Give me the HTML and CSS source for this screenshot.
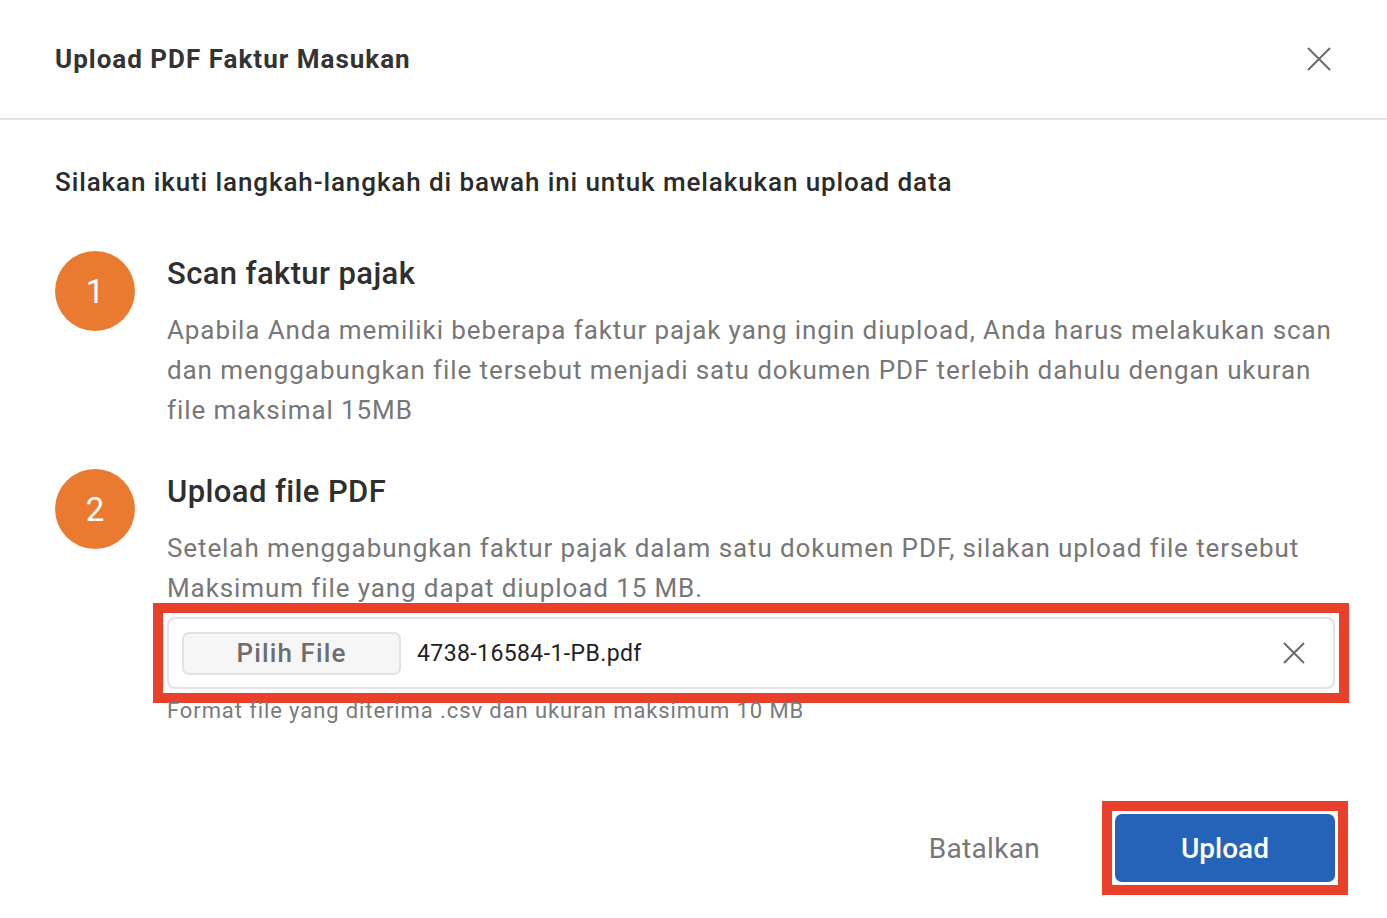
FILE: index.html
```html
<!DOCTYPE html>
<html>
<head>
    <title>Upload PDF Faktur Masukan</title>
    <link rel="stylesheet" href="styles.css">
</head>
<body>
    <div class="modal">
        <div class="modal-header">
            <h1>Upload PDF Faktur Masukan</h1>
            <button class="close-btn" aria-label="Tutup">
                <svg width="24" height="24" viewBox="0 0 24 24"><path d="M1 1L23 23M23 1L1 23" stroke="#6b6b6b" stroke-width="2" fill="none"/></svg>
            </button>
        </div>
        <div class="modal-body">
            <p class="intro">Silakan ikuti langkah-langkah di bawah ini untuk melakukan upload data</p>

            <div class="step">
                <div class="step-number">1</div>
                <div class="step-content">
                    <h2>Scan faktur pajak</h2>
                    <p>Apabila Anda memiliki beberapa faktur pajak yang ingin diupload, Anda harus melakukan scan dan menggabungkan file tersebut menjadi satu dokumen PDF terlebih dahulu dengan ukuran file maksimal 15MB</p>
                </div>
            </div>

            <div class="step">
                <div class="step-number">2</div>
                <div class="step-content">
                    <h2>Upload file PDF</h2>
                    <p>Setelah menggabungkan faktur pajak dalam satu dokumen PDF, silakan upload file tersebut<br>Maksimum file yang dapat diupload 15 MB.</p>
                    <div class="highlight input-highlight">
                        <div class="file-input">
                            <button class="choose-btn">Pilih File</button>
                            <span class="file-name">4738-16584-1-PB.pdf</span>
                            <button class="clear-btn" aria-label="Hapus">
                                <svg width="22" height="22" viewBox="0 0 22 22"><path d="M1 1L21 21M21 1L1 21" stroke="#6b6b6b" stroke-width="2" fill="none"/></svg>
                            </button>
                        </div>
                    </div>
                    <div class="hint">Format file yang diterima .csv dan ukuran maksimum 10 MB</div>
                </div>
            </div>
        </div>
        <div class="modal-footer">
            <button class="cancel-btn">Batalkan</button>
            <div class="highlight button-highlight">
                <button class="upload-btn">Upload</button>
            </div>
        </div>
    </div>
</body>
</html>
```

FILE: styles.css
```css
body {
    font-family: Roboto, "Liberation Sans", sans-serif;
    background-color: #ffffff;
    margin: 0;
    padding: 0;
    color: #333333;
}

button {
    font-family: inherit;
    cursor: pointer;
}

.modal-header {
    height: 118px;
    display: flex;
    align-items: center;
    justify-content: space-between;
    padding: 0 52px 0 55px;
    border-bottom: 2px solid #e3e3e3;
}

h1 {
    margin: 0;
    font-size: 26px;
    font-weight: 700;
    letter-spacing: 1px;
    color: #333333;
}

.close-btn {
    background: none;
    border: none;
    padding: 0;
    margin-right: 4px;
    display: flex;
}

.modal-body {
    padding: 42px 52px 0 55px;
}

.intro {
    margin: 0 0 49px;
    font-size: 26px;
    font-weight: 500;
    line-height: 40px;
    letter-spacing: 0.9px;
    color: #2b2b2b;
}

.step {
    display: flex;
    gap: 32px;
    margin-bottom: 39px;
}

.step-number {
    flex: none;
    width: 80px;
    height: 80px;
    border-radius: 50%;
    background-color: #eb7a31;
    color: white;
    font-size: 33px;
    display: flex;
    align-items: center;
    justify-content: center;
}

.step-content {
    flex: 1;
    padding-top: 3px;
}

.step-content h2 {
    margin: 0 0 16px;
    font-size: 31px;
    font-weight: 500;
    line-height: 40px;
    letter-spacing: 0.4px;
    color: #2f2f2f;
}

.step-content p {
    margin: 0;
    font-size: 26px;
    line-height: 40px;
    letter-spacing: 0.9px;
    color: #777777;
}

/* red annotation frames drawn around the input and the button */
.highlight {
    border: 10px solid #e8402a;
}

.input-highlight {
    padding: 4px;
    margin: -5px -14px -14px;
}

.button-highlight {
    padding: 3px;
    margin: 0 -13px;
    display: flex;
}

.file-input {
    height: 68px;
    border: 2px solid #e2e2e2;
    border-radius: 8px;
    display: flex;
    align-items: center;
    padding: 0 28px 0 13px;
}

.choose-btn {
    width: 219px;
    height: 43px;
    background-color: #f6f6f6;
    border: 2px solid #e2e2e2;
    border-radius: 7px;
    font-size: 26px;
    font-weight: 500;
    letter-spacing: 1.1px;
    color: #6e6e6e;
}

.file-name {
    flex: 1;
    margin-left: 16px;
    font-size: 23px;
    letter-spacing: 0.4px;
    color: #222222;
}

.clear-btn {
    background: none;
    border: none;
    padding: 0;
    display: flex;
}

.hint {
    margin-top: 7px;
    font-size: 22px;
    line-height: 30px;
    letter-spacing: 0.9px;
    color: #7a7a7a;
}

.modal-footer {
    display: flex;
    justify-content: flex-end;
    align-items: center;
    gap: 75px;
    padding: 36px 52px 22px 0;
}

.cancel-btn {
    background: none;
    border: none;
    font-size: 28px;
    letter-spacing: 0.3px;
    color: #777777;
    padding: 0;
}

.upload-btn {
    width: 220px;
    height: 68px;
    background-color: #2563b9;
    color: white;
    border: none;
    border-radius: 7px;
    font-size: 28px;
    font-weight: 500;
}
```
